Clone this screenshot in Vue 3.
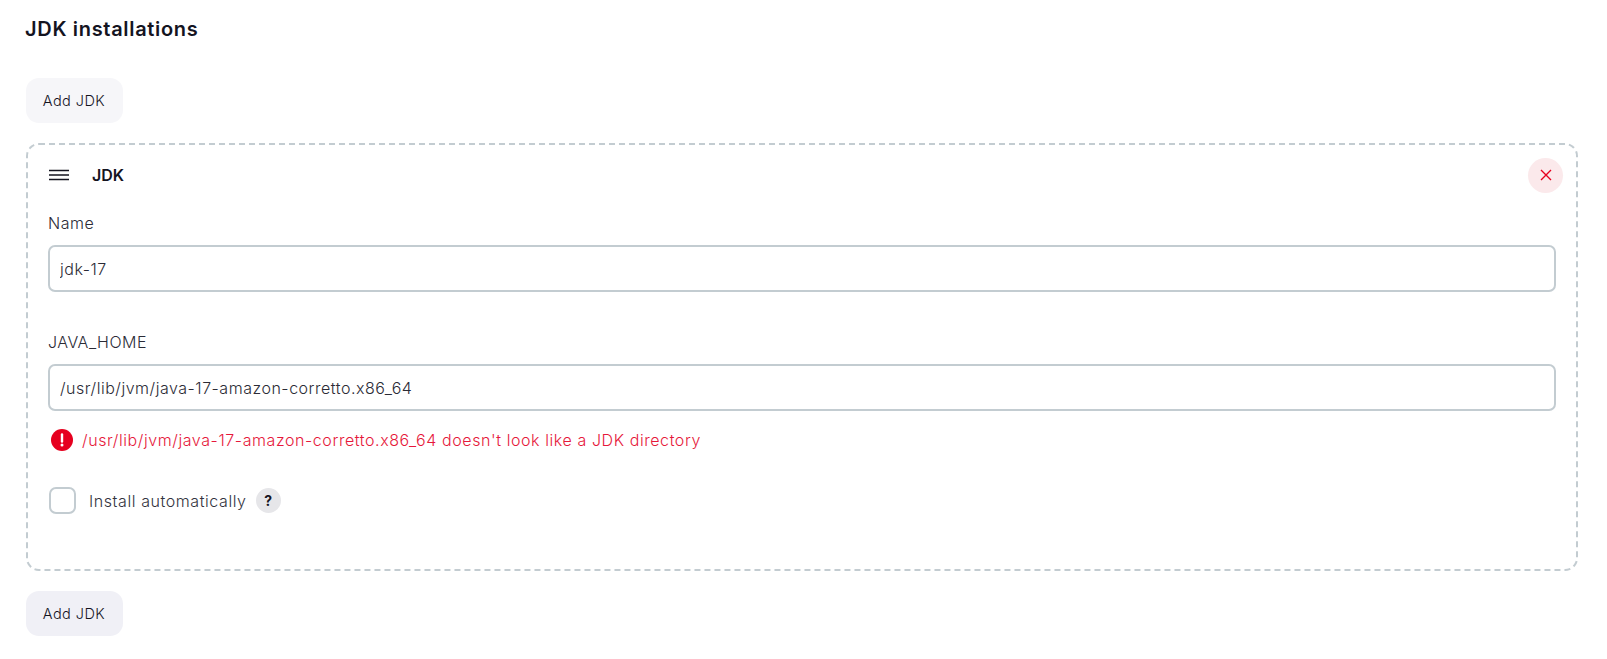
<template>
  <div class="page">
    <h2 class="title">JDK installations</h2>
    <button class="add-btn" type="button">Add JDK</button>
    <div class="repeated">
      <div class="repeated-header">
        <svg class="handle" width="20" height="12" viewBox="0 0 20 12">
          <path d="M0 1.5h20M0 6h20M0 10.5h20" stroke="#14141f" stroke-width="1.6" fill="none" />
        </svg>
        <span class="repeated-title">JDK</span>
        <button class="delete-btn" type="button" aria-label="Delete">
          <svg width="12" height="12" viewBox="0 0 12 12">
            <path d="M1 1l10 10M11 1L1 11" stroke="#e6001f" stroke-width="1.4" fill="none" />
          </svg>
        </button>
      </div>

      <div class="form-group name-group">
        <label>Name</label>
        <input type="text" value="jdk-17" />
      </div>

      <div class="form-group home-group">
        <label>JAVA_HOME</label>
        <input type="text" value="/usr/lib/jvm/java-17-amazon-corretto.x86_64" />
      </div>

      <div class="error">
        <svg width="22" height="22" viewBox="0 0 22 22">
          <circle cx="11" cy="11" r="11" fill="#e6001f" />
          <path d="M11 5.5v7" stroke="#fff" stroke-width="2.4" stroke-linecap="round" fill="none" />
          <circle cx="11" cy="16" r="1.5" fill="#fff" />
        </svg>
        <span>/usr/lib/jvm/java-17-amazon-corretto.x86_64 doesn't look like a JDK directory</span>
      </div>

      <div class="checkbox-row">
        <span class="checkbox"></span>
        <span class="checkbox-label">Install automatically</span>
        <span class="help">?</span>
      </div>
    </div>
    <button class="add-btn add-btn-bottom" type="button">Add JDK</button>
  </div>
</template>

<script setup>
</script>

<style>
body {
  background: #fff;
}
</style>

<style scoped>
.page {
  height: 659px;
  box-sizing: border-box;
  padding: 16px 29px 0 26px;
  font-family: Inter, "Noto Sans", sans-serif;
  color: #14141f;
  overflow: hidden;
}

.title {
  margin: 0 0 35px -1px;
  font-size: 20px;
  line-height: 27px;
  font-weight: 600;
  letter-spacing: 0.68px;
}

.add-btn {
  display: block;
  width: 97px;
  height: 45px;
  padding: 0 1px 0 0;
  border: none;
  border-radius: 13px;
  background: #f6f6f9;
  color: #14141f;
  font-family: inherit;
  font-size: 14.5px;
  font-weight: 300;
  letter-spacing: 0.45px;
}

.add-btn-bottom {
  margin-top: 20px;
  background: #f0f0f6;
}

.repeated {
  box-sizing: border-box;
  height: 428px;
  margin-top: 20px;
  padding: 0 20px;
  border: 2px dashed #c3ccd1;
  border-radius: 13px;
}

.repeated-header {
  display: flex;
  align-items: center;
  height: 34px;
  margin: 13px -7px 0 1px;
}

.handle {
  margin-right: 23px;
}

.repeated-title {
  font-size: 16px;
  font-weight: 600;
}

.delete-btn {
  display: flex;
  align-items: center;
  justify-content: center;
  width: 35px;
  height: 35px;
  margin-left: auto;
  padding: 0;
  border: none;
  border-radius: 50%;
  background: #fbe9eb;
}

.form-group label {
  display: block;
  font-size: 16px;
  font-weight: 300;
  line-height: 22px;
  color: #2b2b36;
  letter-spacing: 0.5px;
}

.form-group input {
  display: block;
  box-sizing: border-box;
  width: 100%;
  height: 47px;
  margin-top: 11px;
  padding: 0 10px;
  border: 2px solid #c3ccd1;
  border-radius: 7px;
  background: #fff;
  color: #2b2b36;
  font-family: inherit;
  font-size: 16px;
  font-weight: 300;
  letter-spacing: 0.52px;
}

.name-group {
  margin-top: 20px;
}

.home-group {
  margin-top: 39px;
}

.error {
  display: flex;
  align-items: center;
  gap: 9px;
  margin-top: 18px;
  padding-left: 3px;
  color: #e6183b;
  font-size: 16px;
  font-weight: 300;
  line-height: 22px;
  letter-spacing: 0.58px;
}

.checkbox-row {
  display: flex;
  align-items: center;
  margin-top: 36px;
}

.checkbox {
  box-sizing: border-box;
  width: 27px;
  height: 27px;
  margin-left: 1px;
  border: 2.5px solid #c3ccd1;
  border-radius: 7px;
}

.checkbox-label {
  margin-left: 13px;
  font-size: 16px;
  font-weight: 300;
  color: #33333e;
  letter-spacing: 0.58px;
}

.help {
  display: flex;
  align-items: center;
  justify-content: center;
  width: 25px;
  height: 25px;
  margin-left: 9px;
  border-radius: 50%;
  background: #e6e6e9;
  color: #14141f;
  font-size: 14px;
  font-weight: 700;
}
</style>
